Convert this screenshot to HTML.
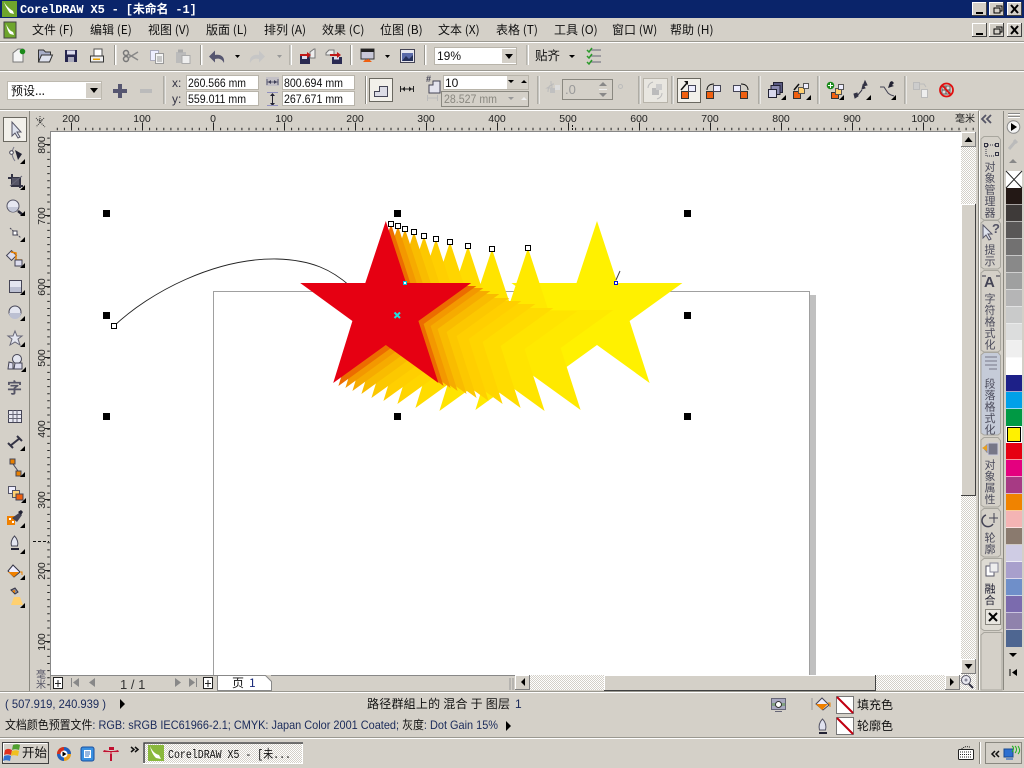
<!DOCTYPE html>
<html><head><meta charset="utf-8"><title>CorelDRAW X5</title>
<style>
html,body{margin:0;padding:0;background:#d4d0c8;overflow:hidden}
svg{display:block;position:absolute;left:0;top:0}
text{font-family:"Liberation Sans","Noto Sans CJK SC",sans-serif;font-size:12px;fill:#000}
.m{font-size:12px;font-family:"Noto Sans CJK SC",sans-serif;fill:#111}
.r{font-size:10.5px;fill:#222;text-anchor:middle;font-family:"Liberation Sans",sans-serif}
.v{font-size:11px;fill:#4a4a5a;writing-mode:vertical-rl;font-family:"Noto Sans CJK SC",sans-serif;letter-spacing:.5px}
.f{font-size:12px;font-family:"Liberation Sans","Noto Sans CJK SC",sans-serif;fill:#111}
.n{font-size:12px;fill:#1a2a5a}
</style></head><body>
<svg width="1024" height="768" viewBox="0 0 1024 768" xmlns="http://www.w3.org/2000/svg" shape-rendering="auto">
<defs>
<pattern id="d" width="2" height="2" patternUnits="userSpaceOnUse"><rect width="2" height="2" fill="#fff"/><rect width="1" height="1" fill="#d4d0c8"/><rect x="1" y="1" width="1" height="1" fill="#d4d0c8"/></pattern>
<polygon id="s" points="0,0 20.3,62 85.4,62 32.6,100 52.6,162 0,124 -52.6,162 -33.4,100 -85.6,62 -20.5,62"/>
<g id="b"><rect width="15" height="15" fill="#d4d0c8"/><path d="M.5 14.5V.5H14.5" fill="none" stroke="#fff"/><path d="M14.5 0V14.5H0" fill="none" stroke="#808080"/></g>
<path id="t" d="M0 0h5v-5z" fill="#000"/>
<g id="wb"><rect width="15" height="14" fill="#d4d0c8"/><path d="M.5 13V.5H14" fill="none" stroke="#fff"/><path d="M14.5 0V13.5H0" fill="none" stroke="#404040"/></g>
</defs>
<rect width="1024" height="768" fill="#d4d0c8"/>

<!-- title bar -->
<rect width="1024" height="18" fill="#0a246a"/>
<rect x="2" y="1" width="15" height="16" fill="#6ea52c"/>
<path d="M4 2c2 4 6 7 9 9l1 3-4-1C8 10 5 6 4 2z" fill="#fff"/>
<text x="20" y="13" style="font-family:'Liberation Mono','Noto Sans CJK SC',monospace;font-weight:bold;font-size:12px;fill:#fff;letter-spacing:-.15px">CorelDRAW X5 - [未命名 -1]</text>
<use href="#wb" x="972" y="2"/><use href="#wb" x="989" y="2"/><use href="#wb" x="1007" y="2"/>
<path d="M994 8h6v5h-6zM996 6h6v5h-2" fill="none" stroke="#000"/><rect x="976" y="12" width="7" height="2"/>
<path d="M1011 5l7 8M1018 5l-7 8" stroke="#000" stroke-width="2"/>

<!-- menu bar -->
<rect x="4" y="22" width="12" height="16" fill="#6ea52c" stroke="#444"/><path d="M6 24c2 4 4 7 7 8l1 3-4-1C8 32 7 28 6 24z" fill="#fff"/>
<text class="m" x="32" y="34">文件 (F)</text><text class="m" x="90" y="34">编辑 (E)</text><text class="m" x="148" y="34">视图 (V)</text><text class="m" x="206" y="34">版面 (L)</text><text class="m" x="264" y="34">排列 (A)</text><text class="m" x="322" y="34">效果 (C)</text><text class="m" x="380" y="34">位图 (B)</text><text class="m" x="438" y="34">文本 (X)</text><text class="m" x="496" y="34">表格 (T)</text><text class="m" x="554" y="34">工具 (O)</text><text class="m" x="612" y="34">窗口 (W)</text><text class="m" x="670" y="34">帮助 (H)</text>
<use href="#wb" x="972" y="23"/><use href="#wb" x="989" y="23"/><use href="#wb" x="1007" y="23"/>
<rect x="976" y="33" width="7" height="2"/><path d="M994 29h6v5h-6zM996 27h6v5h-2" fill="none" stroke="#000"/><path d="M1011 26l7 8M1018 26l-7 8" stroke="#000" stroke-width="2"/>
<path d="M0 41.5H1024" stroke="#9a9890"/><path d="M0 42.5H1024" stroke="#fff"/>

<!-- standard toolbar -->
<path d="M0 70.5H1024" stroke="#9a9890"/><path d="M0 71.5H1024" stroke="#fff"/>
<g fill="none" stroke="#fff" stroke-width="2"><path d="M115.5 45v20M201.5 45v20M291 45v20M351.5 45v20M425.5 45v20M528 45v20"/></g>
<g fill="none" stroke="#9a9890"><path d="M114.5 45v20M200.5 45v20M290 45v20M350.5 45v20M424.5 45v20M527 45v20"/></g>
<path d="M13 53l5-4h5v13H13z" fill="#f4f4f4" stroke="#777"/><circle cx="22.500" cy="51.500" r="2.800" fill="#1a8a1a"/>
<path d="M38.500 62V50h5l2 2h5v3" fill="#a8aec8" stroke="#333"/><path d="M38.500 62l3-7h11l-3 7z" fill="#dfe2ee" stroke="#333"/>
<rect x="65" y="50" width="12" height="12" fill="#26264e"/><rect x="67" y="50.500" width="8" height="4" fill="#dde"/><rect x="68" y="57" width="6" height="5" fill="#aab"/>
<path d="M94 49h8v7h-8z" fill="#fff" stroke="#555"/><rect x="90.500" y="56" width="13" height="6" fill="#eee" stroke="#333"/><rect x="93" y="58.500" width="7" height="1.500" fill="#e8a000"/>
<g fill="none" stroke="#999" stroke-width="1.500"><circle cx="126" cy="59" r="2.500" stroke="#777"/><circle cx="126" cy="53" r="2.500" stroke="#777"/><path d="M128 58l10-6M128 54l10 6" stroke="#888"/></g>
<g fill="#eef" stroke="#aab"><rect x="150.500" y="50.500" width="8" height="10"/><rect x="155.500" y="53.500" width="8" height="10" fill="#f4f4f4" stroke="#999"/></g><path d="M157 57h5M157 59h5M157 61h5" stroke="#999"/>
<rect x="176" y="52" width="10" height="11" fill="#bbb"/><rect x="178" y="49.500" width="5" height="3" fill="#aaa"/><rect x="182" y="55.500" width="8" height="8" fill="#eee" stroke="#aaa"/>
<path d="M224 63c1-6-3-9-9-8V50.500l-6 6 6 6V59c4-1 7 0 9 4z" fill="#565670"/>
<path d="M235 55h5l-2.500 3z" fill="#000"/>
<path d="M250 63c-1-6 3-9 9-8V50.500l6 6-6 6V59c-4-1-7 0-9 4z" fill="#c6c6c6"/>
<path d="M277 55h5l-2.500 3z" fill="#999"/>
<rect x="300" y="56" width="10" height="8" fill="#2a2a52"/><rect x="302" y="56" width="5" height="3" fill="#dde"/><path d="M310 52l4-3h1v9h-5z" fill="#eee" stroke="#777"/><path d="M300 54h7v-2l4 3-4 3v-2h-7z" fill="#c01818"/>
<path d="M326 53l3-3h5v5h-8z" fill="#eee" stroke="#777"/><rect x="332" y="57" width="10" height="7" fill="#2a2a52"/><rect x="334" y="57" width="5" height="2.500" fill="#dde"/><path d="M330 54h7v-2l4 3-4 3v-2h-7z" fill="#c01818"/>
<rect x="361" y="49" width="13" height="10" fill="#c8c8d8" stroke="#333"/><rect x="361" y="49" width="13" height="3" fill="#222"/><path d="M363 62c2-2 2-3 4-2 1-2 2-1 5 2z" fill="#f06010"/>
<path d="M385 55h5l-2.500 3z" fill="#000"/>
<rect x="400.500" y="49.500" width="14" height="13" fill="#e6e6ee" stroke="#445"/><rect x="402" y="53" width="11" height="8" fill="#5a6aa8"/><path d="M402 61l4-5 3 3 4-4v6z" fill="#25305a"/>
<rect x="434.500" y="47.500" width="82" height="17" fill="#fff" stroke="#b8b4aa"/><rect x="502" y="49" width="14" height="14" fill="#d4d0c8"/><path d="M505 54h8l-4 5z"/>
<text class="f" x="437" y="60">19%</text>
<text class="m" style="font-size:12.500px" x="535" y="60">贴齐</text><path d="M569 55h6l-3 3z"/>
<path d="M590 50h11M590 56h11M590 62h11" stroke="#667"/><path d="M587 50l2 2 3-4M587 56l2 2 3-4M587 62l2 2 3-4" fill="none" stroke="#2a9a2a" stroke-width="1.500"/>

<!-- property bar -->
<path d="M0 109.500H1024" stroke="#9a9890"/><path d="M0 110.500H978" stroke="#fff"/>
<g fill="none" stroke="#fff" stroke-width="1"><path d="M165 76v28M366.500 76v28M539 76v28M640 76v28M673 76v28M760 76v28M819 76v28M906 76v28"/></g>
<g fill="none" stroke="#8a8880"><path d="M164 76v28M365.500 76v28M538 76v28M639 76v28M672 76v28M759 76v28M818 76v28M905 76v28"/></g>
<rect x="7.500" y="81.500" width="94" height="18" fill="#fff" stroke="#bdb9af"/><rect x="86" y="83" width="15" height="15" fill="#d4d0c8"/><path d="M90 88h8l-4 5z"/>
<text class="m" style="font-size:12px" x="11" y="95">预设...</text>
<path d="M118 84h4v5h5v4h-5v5h-4v-5h-5v-4h5z" fill="#565670"/><rect x="140" y="89" width="12" height="4" fill="#bbb"/>
<text class="f" style="font-size:12px;fill:#334" x="172" y="87">x:</text><text class="f" style="font-size:12px;fill:#334" x="172" y="103">y:</text>
<g fill="#fff" stroke="#b8b4aa"><rect x="186.500" y="75.500" width="72" height="14"/><rect x="186.500" y="91.500" width="72" height="14"/><rect x="282.500" y="75.500" width="72" height="14"/><rect x="282.500" y="91.500" width="72" height="14"/></g>
<text class="f" x="188" y="87" textLength="58" lengthAdjust="spacingAndGlyphs">260.566 mm</text><text class="f" x="188" y="103" textLength="58" lengthAdjust="spacingAndGlyphs">559.011 mm</text><text class="f" x="284" y="87" textLength="59" lengthAdjust="spacingAndGlyphs">800.694 mm</text><text class="f" x="284" y="103" textLength="59" lengthAdjust="spacingAndGlyphs">267.671 mm</text>
<path d="M267 82h11M267 79v6M278 79v6" stroke="#445" fill="none"/><path d="M271 80l-3 2 3 2zM274 80l3 2-3 2z" fill="#223"/><rect x="266" y="77" width="13" height="9" fill="#9090c0" opacity=".25"/>
<path d="M272.500 94v12" stroke="#223"/><path d="M270 96l2.500-3 2.500 3zM270 103l2.500 3 2.500-3z" fill="#223"/><path d="M267 92.500h11M267 105.500h11" stroke="#9090c0"/>
<rect x="369.500" y="78.500" width="23" height="23" fill="#f2f0ea" stroke="#6a6860"/>
<path d="M374.500 96.500v-5h5v-5h8v10z" fill="#dcdce6" stroke="#445"/>
<path d="M400 89h14M400.500 86v6M413.500 86v6" stroke="#222"/><path d="M405 86.500l-3 2.500 3 2.500zM409 86.500l3 2.500-3 2.500z" fill="#222"/>
<text style="font-size:9px;font-weight:bold;fill:#445" x="426" y="82">#</text>
<path d="M429 89v-4h4v-4h7v12h-11z" fill="#e4e4ee" stroke="#445"/>
<rect x="443.500" y="75.500" width="85" height="14" fill="#fff" stroke="#b8b4aa"/><rect x="507" y="76" width="21" height="13" fill="#d4d0c8"/><path d="M508 80h6l-3 3zM521 83h6l-3-3z"/>
<text class="f" x="445" y="87">10</text>
<path d="M427 98h11M427.500 95v6M437.500 95v6" stroke="#bbb"/>
<rect x="441.500" y="91.500" width="87" height="15" fill="none" stroke="#8a8880"/>
<text class="f" style="fill:#8a8880" x="444" y="103" textLength="53" lengthAdjust="spacingAndGlyphs">28.527 mm</text><path d="M508 97h6l-3 3z" fill="#999"/><path d="M521 100h6l-3-3z" fill="#eee"/>
<path d="M547 88l5-3v3zM551 84v-3" stroke="#bbb" fill="none"/><rect x="550" y="88" width="5" height="5" fill="#c0c0c0"/><rect x="555" y="85" width="5" height="5" fill="#ddd"/><path d="M548 92c0-6 3-8 6-8" stroke="#bbb" fill="none"/>
<rect x="562.500" y="79.500" width="50" height="20" fill="none" stroke="#8a8880"/><text class="f" style="fill:#999;font-size:13px" x="565" y="94">.0</text>
<path d="M599 86l4-4 4 4z" fill="#888"/><path d="M599 93l4 4 4-4z" fill="#888"/><path d="M599 89.500h8" stroke="#eee"/>
<circle cx="620.500" cy="86.500" r="2" fill="none" stroke="#bbb"/>
<rect x="643.500" y="78.500" width="24" height="24" fill="#e8e6e0" stroke="#b8b4aa"/>
<rect x="652" y="88" width="7" height="7" fill="#bbb"/><rect x="656" y="84" width="6" height="6" fill="#ccc"/><path d="M648 88c0-3 2-5 5-6M662 93c0 3-2 5-5 6" fill="none" stroke="#bbb"/>
<rect x="677.500" y="78.500" width="23" height="24" fill="#f2f0ea" stroke="#6a6860"/>
<rect x="681.500" y="91.500" width="7" height="7" fill="#f06010" stroke="#333"/><rect x="688.500" y="85.500" width="7" height="6" fill="#eef" stroke="#445"/><path d="M681 90l6-7" stroke="#111" stroke-width="1.500"/><path d="M684 81h4v4z" fill="#111"/>
<rect x="706.500" y="91.500" width="7" height="7" fill="#f06010" stroke="#333"/><rect x="713.500" y="85.500" width="7" height="6" fill="#eef" stroke="#445"/><path d="M707 90c0-4 3-6 7-6" fill="none" stroke="#111"/>
<rect x="740.500" y="91.500" width="7" height="7" fill="#f06010" stroke="#333"/><rect x="733.500" y="85.500" width="7" height="6" fill="#eef" stroke="#445"/><path d="M748 90c0-4-3-6-7-6" fill="none" stroke="#111"/>
<rect x="773.500" y="82.500" width="9" height="10" fill="#5a5a82" stroke="#223"/><rect x="771" y="85.500" width="9" height="9" fill="#8a8ab0" stroke="#223"/><rect x="768.500" y="89.500" width="8" height="8" fill="#d8d8ee" stroke="#223"/><use href="#t" x="781" y="100"/>
<rect x="793.500" y="91.500" width="7" height="7" fill="#f06010" stroke="#333"/><rect x="798.500" y="87.500" width="6" height="6" fill="#ffd070" stroke="#555"/><rect x="803.500" y="83.500" width="5" height="5" fill="#eef" stroke="#555"/><path d="M794 90l5-6" stroke="#111" stroke-width="1.500"/><use href="#t" x="806" y="100"/>
<circle cx="830.500" cy="85.500" r="3.800" fill="#1a8a1a"/><path d="M828 85.500h5M830.500 83v5" stroke="#fff"/>
<rect x="831.500" y="92.500" width="7" height="6" fill="#f06010" stroke="#333"/><rect x="835.500" y="88.500" width="6" height="6" fill="#ffd070" stroke="#555"/><rect x="838.500" y="84.500" width="5" height="5" fill="#eef" stroke="#555"/><use href="#t" x="839" y="100"/>
<path d="M857 96l5-6M863 85l-1 4 3-1zM865 81l2 4-4 1zM854 94l3-1 1 3-3 2z" fill="#334" stroke="#334"/><use href="#t" x="866" y="100"/>
<path d="M880 87h4l4 6c2 2 3 2 6 3" fill="none" stroke="#445"/><path d="M890 82l-2 6 6-2-2-1 2-2-2-2z" fill="#223"/><use href="#t" x="891" y="100"/>
<rect x="913.500" y="82.500" width="6" height="7" fill="#ccc" stroke="#bbb"/><rect x="921.500" y="89.500" width="6" height="8" fill="#eee" stroke="#bbb"/><path d="M920 84h4l2 3" fill="none" stroke="#bbb"/>
<rect x="942" y="86" width="8" height="8" fill="#ddd" stroke="#666"/><path d="M946 86v8M942 90h8" stroke="#555"/><circle cx="946.500" cy="90" r="6.500" fill="none" stroke="#e01010" stroke-width="1.800"/><path d="M942 85l9 10" stroke="#e01010" stroke-width="1.800"/>

<!-- left toolbox & rulers background -->
<path d="M29.500 111V691" stroke="#8a8880"/>
<rect x="3.500" y="117.500" width="23" height="24" fill="#f2f0ea" stroke="#6a6860"/>
<path d="M12 122v14l3-3 3 5 2-1-3-5h4z" fill="#dfe3ee" stroke="#556"/>
<path d="M14 147c-3 5-2 10 1 14" fill="none" stroke="#778"/><circle cx="11.500" cy="152.500" r="1.800" fill="#fff" stroke="#445"/><path d="M15 150l7 4-4 6z" fill="#223"/><use href="#t" x="20" y="164"/>
<path d="M12 174v12h11M8 178h12v10" fill="none" stroke="#334" stroke-width="2"/><rect x="12" y="178" width="7" height="7" fill="#556"/><path d="M10 186l12-10" stroke="#667"/><use href="#t" x="20" y="190"/>
<circle cx="13" cy="206" r="6" fill="#e6e8f2" stroke="#556"/><path d="M8 207h10a5 5 0 0 1-10 0z" fill="#c4c8d8"/><path d="M18 211l5 4" stroke="#223" stroke-width="2.500"/><use href="#t" x="20" y="216"/>
<path d="M10 228l11 10" stroke="#445" stroke-dasharray="2 1"/><rect x="13" y="231" width="4" height="4" fill="#fff" stroke="#445"/><use href="#t" x="20" y="242"/>
<rect x="8" y="252" width="7" height="7" transform="rotate(45 11.500 255.500)" fill="#dde" stroke="#445"/><path d="M11 252l5 1v7h6" fill="none" stroke="#e88000" stroke-width="1.500"/><rect x="15" y="260" width="7" height="6" fill="#dde" stroke="#445"/><use href="#t" x="20" y="268"/>
<rect x="9.500" y="280.500" width="12" height="12" fill="#e4e6f0" stroke="#445"/><rect x="10" y="287" width="11" height="5" fill="#bcc0d2"/><use href="#t" x="20" y="295"/>
<circle cx="15" cy="312" r="6" fill="#e4e6f0" stroke="#445"/><path d="M9 313h12a6 6 0 0 1-12 0z" fill="#bcc0d2"/><use href="#t" x="20" y="321"/>
<path d="M15 331l2 5h5l-4 3 2 6-5-3-5 3 2-6-4-3h5z" fill="#e4e6f0" stroke="#667"/><use href="#t" x="20" y="347"/>
<circle cx="17" cy="359" r="4.500" fill="#e4e6f0" stroke="#445"/><path d="M9 362l4 1v6h-5zM15 363h7v6h-8z" fill="#dde" stroke="#445"/><use href="#t" x="21" y="372"/>
<text style="font-size:15px;font-weight:bold;fill:#556;font-family:'Noto Sans CJK SC',sans-serif" x="7" y="393">字</text>
<rect x="8.500" y="410.500" width="13" height="12" fill="#e8e8f2" stroke="#445"/><path d="M8 414.500h13M8 418.500h13M13 410v12M17 410v12" stroke="#667"/>
<path d="M10 446l10-8" stroke="#334" stroke-width="2"/><path d="M8 443l5 5M17 436l5 5" stroke="#334" stroke-width="2"/><use href="#t" x="20" y="451"/>
<rect x="10" y="459" width="5" height="5" fill="#e88000" stroke="#445"/><rect x="16" y="471" width="5" height="5" fill="#e88000" stroke="#445"/><path d="M13 464l5 7" stroke="#445"/><use href="#t" x="20" y="477"/>
<rect x="8.500" y="486.500" width="7" height="7" fill="#eef" stroke="#556"/><rect x="12.500" y="490.500" width="7" height="7" fill="#ffd070" stroke="#556"/><rect x="16" y="494" width="7" height="6" fill="#f06010" stroke="#445"/><use href="#t" x="21" y="503"/>
<path d="M7 516h8v9H7z" fill="#f08000"/><path d="M9 518h2v2H9zM12 521h2v2h-2z" fill="#fff"/><path d="M12 518l7-5 3 2-5 7z" fill="#445"/><path d="M18 512l3-2 2 2-2 3z" fill="#223"/><use href="#t" x="20" y="528"/>
<path d="M14.500 536c3 3 4 7 3 10h-6c-1-3 0-7 3-10z" fill="#e4e6f0" stroke="#445"/><rect x="11" y="548" width="8" height="2" fill="#223"/><use href="#t" x="20" y="554"/>
<path d="M13 565l7 7-6 5-6-6z" fill="#eef" stroke="#334"/><path d="M8 572h11l-5 5z" fill="#f08000"/><path d="M20 572h2v3" fill="none" stroke="#e88000"/><use href="#t" x="20" y="580"/>
<path d="M11 590l4-2 3 4-3 2z" fill="#889" stroke="#334"/><path d="M12 591l3-1v3z" fill="#f08000"/><path d="M14 597l6 0 3 8H11z" fill="#ffd070"/><use href="#t" x="20" y="608"/>

<!-- rulers -->
<path d="M36 118l9 9M44 118l-8 9" stroke="#333" stroke-dasharray="1 1"/><path d="M37 120h6M40 116v8" stroke="#333" stroke-dasharray="1 1"/>
<g>
<text class="r" x="71" y="122">200</text><text class="r" x="142" y="122">100</text><text class="r" x="213" y="122">0</text><text class="r" x="284" y="122">100</text><text class="r" x="355" y="122">200</text><text class="r" x="426" y="122">300</text><text class="r" x="497" y="122">400</text><text class="r" x="568" y="122">500</text><text class="r" x="639" y="122">600</text><text class="r" x="710" y="122">700</text><text class="r" x="781" y="122">800</text><text class="r" x="852" y="122">900</text><text class="r" x="923" y="122">1000</text>
</g>
<text style="font-size:10px;fill:#222;font-family:'Noto Sans CJK SC',sans-serif" x="955" y="122">毫米</text>
<line x1="56.800" y1="129" x2="975" y2="129" stroke="#222" stroke-width="2.500" stroke-dasharray="1 6.100"/>
<line x1="71" y1="126.500" x2="975" y2="126.500" stroke="#222" stroke-width="8" stroke-dasharray="1 70"/>
<line x1="572.500" y1="125" x2="572.500" y2="132" stroke="#111" stroke-dasharray="2 1"/>
<g>
<text class="r" transform="translate(45 145) rotate(-90)">800</text><text class="r" transform="translate(45 216) rotate(-90)">700</text><text class="r" transform="translate(45 287) rotate(-90)">600</text><text class="r" transform="translate(45 358) rotate(-90)">500</text><text class="r" transform="translate(45 429) rotate(-90)">400</text><text class="r" transform="translate(45 500) rotate(-90)">300</text><text class="r" transform="translate(45 571) rotate(-90)">200</text><text class="r" transform="translate(45 642) rotate(-90)">100</text>
</g>
<text style="font-size:10px;fill:#556;writing-mode:vertical-rl;font-family:'Noto Sans CJK SC',sans-serif" x="41" y="669">毫米</text>
<line x1="48.500" y1="137.600" x2="48.500" y2="690" stroke="#222" stroke-width="2.500" stroke-dasharray="1 6.100"/>
<line x1="47.500" y1="144" x2="47.500" y2="645" stroke="#222" stroke-width="5" stroke-dasharray="1 70"/>
<path d="M33 541.500H49" stroke="#111" stroke-dasharray="3 2"/>

<!-- canvas -->
<rect x="51" y="132" width="910" height="543" fill="#fff"/>
<path d="M50.500 132V690" stroke="#888"/><path d="M50 131.500H961" stroke="#888"/>
<rect x="810" y="295" width="6" height="380" fill="#c0c0c0"/>
<rect x="213.500" y="291.500" width="596" height="400" fill="#fff" stroke="#a0a0a0"/>

<!-- curve -->
<path d="M114 326C150 292 215 258 277 259 312 260 332 270 350 286" fill="none" stroke="#222" stroke-width=".9"/>

<!-- blend stars -->
<use href="#s" x="597" y="221" fill="#fff100"/>
<use href="#s" x="528" y="248" fill="#ffe900"/>
<use href="#s" x="492" y="249" fill="#ffe400"/>
<use href="#s" x="468" y="246" fill="#ffdc00"/>
<use href="#s" x="450" y="242" fill="#ffd500"/>
<use href="#s" x="436" y="239" fill="#ffcf00"/>
<use href="#s" x="424" y="236" fill="#fcc800"/>
<use href="#s" x="414" y="232" fill="#f9bc00"/>
<use href="#s" x="405" y="229" fill="#f6ab00"/>
<use href="#s" x="398" y="226" fill="#f39800"/>
<use href="#s" x="391" y="224" fill="#ec6c00"/>
<use href="#s" x="385.800" y="221" fill="#e60012"/>

<!-- handles -->
<g fill="#000"><rect x="103" y="210" width="7" height="7"/><rect x="394" y="210" width="7" height="7"/><rect x="684" y="210" width="7" height="7"/><rect x="103" y="312" width="7" height="7"/><rect x="684" y="312" width="7" height="7"/><rect x="103" y="413" width="7" height="7"/><rect x="394" y="413" width="7" height="7"/><rect x="684" y="413" width="7" height="7"/></g>
<g fill="#fff" stroke="#000"><rect x="388.500" y="221.500" width="5" height="5"/><rect x="395.500" y="223.500" width="5" height="5"/><rect x="402.500" y="226.500" width="5" height="5"/><rect x="411.500" y="229.500" width="5" height="5"/><rect x="421.500" y="233.500" width="5" height="5"/><rect x="433.500" y="236.500" width="5" height="5"/><rect x="447.500" y="239.500" width="5" height="5"/><rect x="465.500" y="243.500" width="5" height="5"/><rect x="489.500" y="246.500" width="5" height="5"/><rect x="525.500" y="245.500" width="5" height="5"/><rect x="111.500" y="323.500" width="5" height="5"/></g>
<rect x="403.500" y="281.500" width="3" height="3" fill="#fff" stroke="#00c0e0"/>
<rect x="614.500" y="281.500" width="3" height="3" fill="#fff" stroke="#0010d0"/>
<path d="M616 280l4-9" stroke="#444"/>
<path d="M394.500 312.500l5.500 5.500M400 312.500l-5.500 5.500" stroke="#20e0e0" stroke-width="2"/>

<!-- vertical scrollbar -->
<rect x="961" y="132" width="15" height="558" fill="url(#d)"/>
<use href="#b" x="961" y="132"/><path d="M964.500 142h8l-4-5z"/>
<rect x="961" y="204" width="15" height="292" fill="#d4d0c8"/><path d="M961.500 495V204.500H975" fill="none" stroke="#fff"/><path d="M975.500 204V495.500H961" fill="none" stroke="#404040"/>
<use href="#b" x="961" y="659"/><path d="M964.500 664h8l-4 5z"/>

<!-- bottom page nav & h scroll -->
<rect x="51" y="675" width="910" height="16" fill="#d4d0c8"/>
<path d="M51 675.500H218M271 675.500H961" stroke="#888"/>
<rect x="53.500" y="677.500" width="9" height="11" fill="#fff" stroke="#222"/><path d="M58 680v7M55 683.500h6" stroke="#222"/>
<path d="M71.500 678v9" stroke="#888"/><path d="M79 678v9l-6-4.500z" fill="#888"/><path d="M95 678v9l-6-4.500z" fill="#888"/>
<text style="font-size:13px;fill:#333" x="120" y="689">1 / 1</text>
<path d="M175 678v9l6-4.500z" fill="#888"/><path d="M189 678v9l6-4.500z" fill="#888"/><path d="M196.500 678v9" stroke="#888"/>
<rect x="203.500" y="677.500" width="9" height="11" fill="#fff" stroke="#222"/><path d="M208 680v7M205 683.500h6" stroke="#222"/>
<path d="M217.500 675.500v15h54v-9l-6-6z" fill="#fff" stroke="#888"/>
<text class="m" x="232" y="687">页</text><text class="m" style="fill:#1a2a7a" x="249" y="687">1</text>
<path d="M510 678v12M513 678v12" stroke="#999"/>
<rect x="530" y="675" width="431" height="15" fill="url(#d)"/>
<use href="#b" x="515" y="675"/><path d="M525 678v8l-4-4z"/>
<rect x="604" y="675" width="272" height="15" fill="#d4d0c8"/><path d="M604.500 690V675.500H875" fill="none" stroke="#fff"/><path d="M875.500 675V690.500H604" fill="none" stroke="#404040"/>
<use href="#b" x="945" y="675"/><path d="M950 678v8l4-4z"/>
<circle cx="966" cy="680" r="4.500" fill="#e8e8f0" stroke="#556"/><circle cx="966" cy="680" r="1.500" fill="#889"/><path d="M969 684l4 4" stroke="#334" stroke-width="2"/>

<!-- docker -->
<path d="M978.500 111V690" stroke="#8a8880"/><path d="M979.500 111V690" stroke="#fff"/><path d="M1003.500 111V690" stroke="#8a8880"/>
<path d="M986 115l-4 4 4 4M991 115l-4 4 4 4" fill="none" stroke="#556" stroke-width="1.800"/>
<g fill="#d4d0c8" stroke="#a8a69e"><path d="M984 136.500h14l2.500 3V218l-2.500 2H984l-3-2V139z"/><path d="M984 220.500h14l2.500 3V267l-2.500 2H984l-3-2V223z"/><path d="M984 270.500h14l2.500 3V350l-2.500 2H984l-3-2V273z"/><path d="M984 352.500h14l2.500 3V433l-2.500 2H984l-3-2V355z" fill="#c5cbd8"/><path d="M984 437.500h14l2.500 3V505l-2.500 2H984l-3-2V440z"/><path d="M984 508.500h14l2.500 3V555l-2.500 2H984l-3-2V511z"/><path d="M984 558.500h18l0 70-3 2H984l-3-2V561z" fill="#dedbd3"/><path d="M984 632.500h16l2 0V690H981V635z"/></g>
<g fill="none" stroke="#334"><rect x="984.500" y="143.500" width="3" height="3"/><rect x="995.500" y="143.500" width="3" height="3"/><rect x="995.500" y="152.500" width="3" height="3"/></g>
<path d="M986 147v9h9M988 145h7" stroke="#334" stroke-dasharray="1 1" fill="none"/>
<text class="v" x="990" y="161">对象管理器</text>
<path d="M983 225v13l3-3 3 5 2-1-3-5h4z" fill="#dfe3ee" stroke="#556"/><text style="font-size:13px;font-weight:bold;fill:#556" x="992" y="233">?</text>
<text class="v" x="990" y="244">提示</text>
<text style="font-size:15px;font-weight:bold;fill:#445" x="984" y="287">A</text><path d="M982 276h4M996 276h4" stroke="#334"/>
<text class="v" x="990" y="293">字符格式化</text>
<path d="M985 357h12M985 361h12M985 365h12M989 369h8" stroke="#778" />
<text class="v" x="990" y="378">段落格式化</text>
<path d="M983 448l5-5 3 2v8h-4z" fill="#889"/><rect x="988" y="443" width="10" height="12" fill="#778" stroke="#ccd"/><path d="M982 448l5-3v6z" fill="#e8a020"/>
<text class="v" x="990" y="459">对象属性</text>
<path d="M986 515a6 6 0 1 0 7 9" fill="none" stroke="#445" stroke-width="1.500"/><path d="M994 513v10M989 518h9" stroke="#445"/>
<text class="v" x="990" y="532">轮廓</text>
<rect x="986" y="566" width="8" height="10" fill="#fff" stroke="#556"/><rect x="990" y="563" width="8" height="9" fill="#eee" stroke="#889"/>
<text class="v" style="fill:#223" x="990" y="583">融合</text>
<rect x="985.500" y="609.500" width="15" height="15" fill="#e8e6e0" stroke="#8a8880"/><path d="M989 613l8 8M997 613l-8 8" stroke="#000" stroke-width="2"/>

<!-- palette -->
<path d="M1008 113.500h12M1008 116.500h12" stroke="#888"/><path d="M1008 114.500h12M1008 117.500h12" stroke="#fff"/>
<circle cx="1013.500" cy="127" r="6.300" fill="#f4f4f4" stroke="#888"/><path d="M1011 123v8l6-4z"/>
<path d="M1009 149l6-7M1014 140l3 3" stroke="#bbb" stroke-width="3"/>
<path d="M1009 163l4-4 4 4z" fill="#888"/>
<rect x="1006" y="171" width="16" height="17" fill="#fff"/><path d="M1006 171l16 17M1022 171l-16 17" stroke="#222"/>
<g>
<rect x="1006" y="188" width="16" height="17" fill="#231815"/><rect x="1006" y="205" width="16" height="17" fill="#3e3a39"/><rect x="1006" y="222" width="16" height="17" fill="#595757"/><rect x="1006" y="239" width="16" height="17" fill="#727171"/><rect x="1006" y="256" width="16" height="17" fill="#898989"/><rect x="1006" y="273" width="16" height="17" fill="#9fa0a0"/><rect x="1006" y="290" width="16" height="17" fill="#b5b5b6"/><rect x="1006" y="307" width="16" height="17" fill="#c9caca"/><rect x="1006" y="324" width="16" height="17" fill="#dcdddd"/><rect x="1006" y="341" width="16" height="17" fill="#efefef"/><rect x="1006" y="358" width="16" height="17" fill="#fff"/><rect x="1006" y="375" width="16" height="17" fill="#1d2088"/><rect x="1006" y="392" width="16" height="17" fill="#00a0e9"/><rect x="1006" y="409" width="16" height="17" fill="#009944"/><rect x="1006" y="426" width="16" height="17" fill="#fff"/><rect x="1007.500" y="427.500" width="13" height="14" fill="#fff100" stroke="#000"/><rect x="1006" y="443" width="16" height="17" fill="#e60012"/><rect x="1006" y="460" width="16" height="17" fill="#e4007f"/><rect x="1006" y="477" width="16" height="17" fill="#a73a84"/><rect x="1006" y="494" width="16" height="17" fill="#f08300"/><rect x="1006" y="511" width="16" height="17" fill="#f4b4b4"/><rect x="1006" y="528" width="16" height="17" fill="#8a7a6e"/><rect x="1006" y="545" width="16" height="17" fill="#cfcce4"/><rect x="1006" y="562" width="16" height="17" fill="#a89fcc"/><rect x="1006" y="579" width="16" height="17" fill="#6f8fc9"/><rect x="1006" y="596" width="16" height="17" fill="#7b6bae"/><rect x="1006" y="613" width="16" height="17" fill="#8f82ac"/><rect x="1006" y="630" width="16" height="17" fill="#4e6691"/>
</g>
<path d="M1006 204.500h16M1006 221.500h16M1006 238.500h16M1006 255.500h16M1006 272.500h16M1006 289.500h16M1006 306.500h16M1006 323.500h16M1006 340.500h16M1006 357.500h16M1006 374.500h16M1006 391.500h16M1006 408.500h16M1006 442.500h16M1006 459.500h16M1006 476.500h16M1006 493.500h16M1006 510.500h16M1006 527.500h16M1006 544.500h16M1006 561.500h16M1006 578.500h16M1006 595.500h16M1006 612.500h16M1006 629.500h16" stroke="#fff" stroke-opacity=".6"/>
<path d="M1009 653h8l-4 4z"/><path d="M1010 669v7" stroke="#000"/><path d="M1017 669v7l-5-3.500z"/>

<!-- status bar -->
<path d="M0 692.500H1024" stroke="#fff" stroke-width="1"/><path d="M0 691.500H1024" stroke="#9a9890"/>
<text class="n" x="5" y="708" textLength="101" lengthAdjust="spacingAndGlyphs">( 507.919, 240.939 )</text>
<path d="M120 699v10l5-5z"/>
<text class="m" style="font-size:12px" x="367" y="708" textLength="143">路径群組上的 混合 于 图层</text><text class="n" x="515" y="708">1</text>
<rect x="771.500" y="698.500" width="14" height="11" fill="#a8a8c0" stroke="#667"/><rect x="772" y="703" width="13" height="3" fill="#80a080"/><circle cx="778.500" cy="704.500" r="3" fill="#fff" stroke="#333"/><path d="M775 711.500h7" stroke="#667"/>
<path d="M812 698v12" stroke="#999"/>
<path d="M822 698l7 7-6 5-7-6z" fill="#eef" stroke="#445"/><path d="M816 704h12l-6 6z" fill="#f08000"/><path d="M828 703h2v4" fill="none" stroke="#e88000"/>
<rect x="836.500" y="696.500" width="17" height="17" fill="#fff" stroke="#777"/><path d="M837 697l16 16" stroke="#c00010" stroke-width="2"/>
<text class="m" style="font-size:12px" x="857" y="709">填充色</text>
<path d="M822.500 719c3 3 4 7 3 11h-6c-1-4 0-8 3-11z" fill="#dfe1ee" stroke="#556"/><rect x="819" y="732" width="8" height="2" fill="#223"/>
<rect x="836.500" y="717.500" width="17" height="17" fill="#fff" stroke="#777"/><path d="M837 718l16 16" stroke="#c00010" stroke-width="2"/>
<text class="m" style="font-size:12px" x="857" y="730">轮廓色</text>
<text x="5" y="729" textLength="493" lengthAdjust="spacingAndGlyphs" style="font-size:12px;fill:#1a2a5a"><tspan style="fill:#111">文档颜色预置文件</tspan>: RGB: sRGB IEC61966-2.1; CMYK: Japan Color 2001 Coated; <tspan style="fill:#111">灰度</tspan>: Dot Gain 15%</text>
<path d="M506 721v10l5-5z"/>

<!-- taskbar -->
<path d="M0 737.500H1024" stroke="#9a9890"/><path d="M0 738.500H1024" stroke="#fff"/>
<rect x="2.500" y="742.500" width="46" height="21" fill="#d4d0c8" stroke="#404040"/><path d="M3.500 762V743.500H47" fill="none" stroke="#fff"/>
<path d="M5 750c3-2 5-1 7 0l-1 5c-3-1-5-1-7 0z" fill="#e03020"/><path d="M13 745c3-1 5-1 7 0l-1 5c-3-1-5-1-7 0z" fill="#50a030"/><path d="M4 756c3-1 5-1 7 0l-1 5c-3-1-5-1-7 0z" fill="#3070d0"/><path d="M12 751c3-1 5-1 7 0l-1 5c-3-1-5-1-7 0z" fill="#f0c020"/>
<text class="m" style="font-size:12.500px" x="22" y="757">开始</text>
<circle cx="64" cy="754" r="7" fill="#e8a020"/><path d="M64 747a7 7 0 0 1 7 7h-7zM57 754a7 7 0 0 0 7 7v-7z" fill="#2060c0"/><path d="M64 747a7 7 0 0 0-7 7h7z" fill="#d03020"/><circle cx="64" cy="754" r="3.500" fill="#fff"/><path d="M62.500 751.500v5l4-2.500z"/>
<rect x="81" y="747" width="13" height="14" rx="2" fill="#3a90e0" stroke="#1a50a0"/><path d="M84 750h7v8h-7z" fill="#fff"/><path d="M85 752h5M85 754h5M85 756h4" stroke="#3070c0"/>
<path d="M104 750c4 1 6 1 7 1 2 0 4 0 7-1l1 2h-7v9h-2v-9h-7z" fill="#c01030"/><path d="M109 747h5v3h-5z" fill="#c01030"/><path d="M104 753h14" stroke="#e8b0b0"/>
<path d="M131 747l3 2.500-3 2.500M135 747l3 2.500-3 2.500" fill="none" stroke="#111" stroke-width="1.500"/>
<rect x="143.500" y="742.500" width="159" height="21" fill="url(#d)" stroke="#fff"/><path d="M144 763V743H303" fill="none" stroke="#404040" stroke-width="1.500"/>
<rect x="148" y="745" width="16" height="16" fill="#8ab83c"/><path d="M150 746c2 5 5 8 9 9l2 4-5-1c-3-3-5-7-6-12z" fill="#fff"/>
<text style="font-family:'Liberation Mono','Noto Sans CJK SC',monospace;font-size:12px;fill:#111" x="168" y="758" textLength="123" lengthAdjust="spacingAndGlyphs">CorelDRAW X5 - [未...</text>
<rect x="958.500" y="749.500" width="15" height="10" rx="1" fill="#fff" stroke="#222"/><path d="M960 752h12M960 754.500h12M960 757h12" stroke="#222" stroke-dasharray="1 1"/><path d="M962 749c0-2 2-1 3-2s4 0 5 0" fill="none" stroke="#222" stroke-dasharray="1 1"/>
<path d="M979.500 742v22" stroke="#8a8880"/><path d="M980.500 742v22" stroke="#fff"/>
<rect x="985.500" y="742.500" width="36" height="21" fill="none" stroke="#8a8880"/>
<path d="M995 751l-3 3 3 3M999 751l-3 3 3 3" fill="none" stroke="#111" stroke-width="1.500"/>
<rect x="1004" y="749" width="9" height="8" fill="#2c6fd0" stroke="#1a4a90"/><rect x="1006" y="758" width="7" height="2" fill="#7090c0"/><path d="M1012 746c2 1 2 4 0 6M1015 746c2 2 2 5 0 7M1018 746c2 3 2 6 0 8" fill="none" stroke="#20b020"/>
</svg>
</body></html>
